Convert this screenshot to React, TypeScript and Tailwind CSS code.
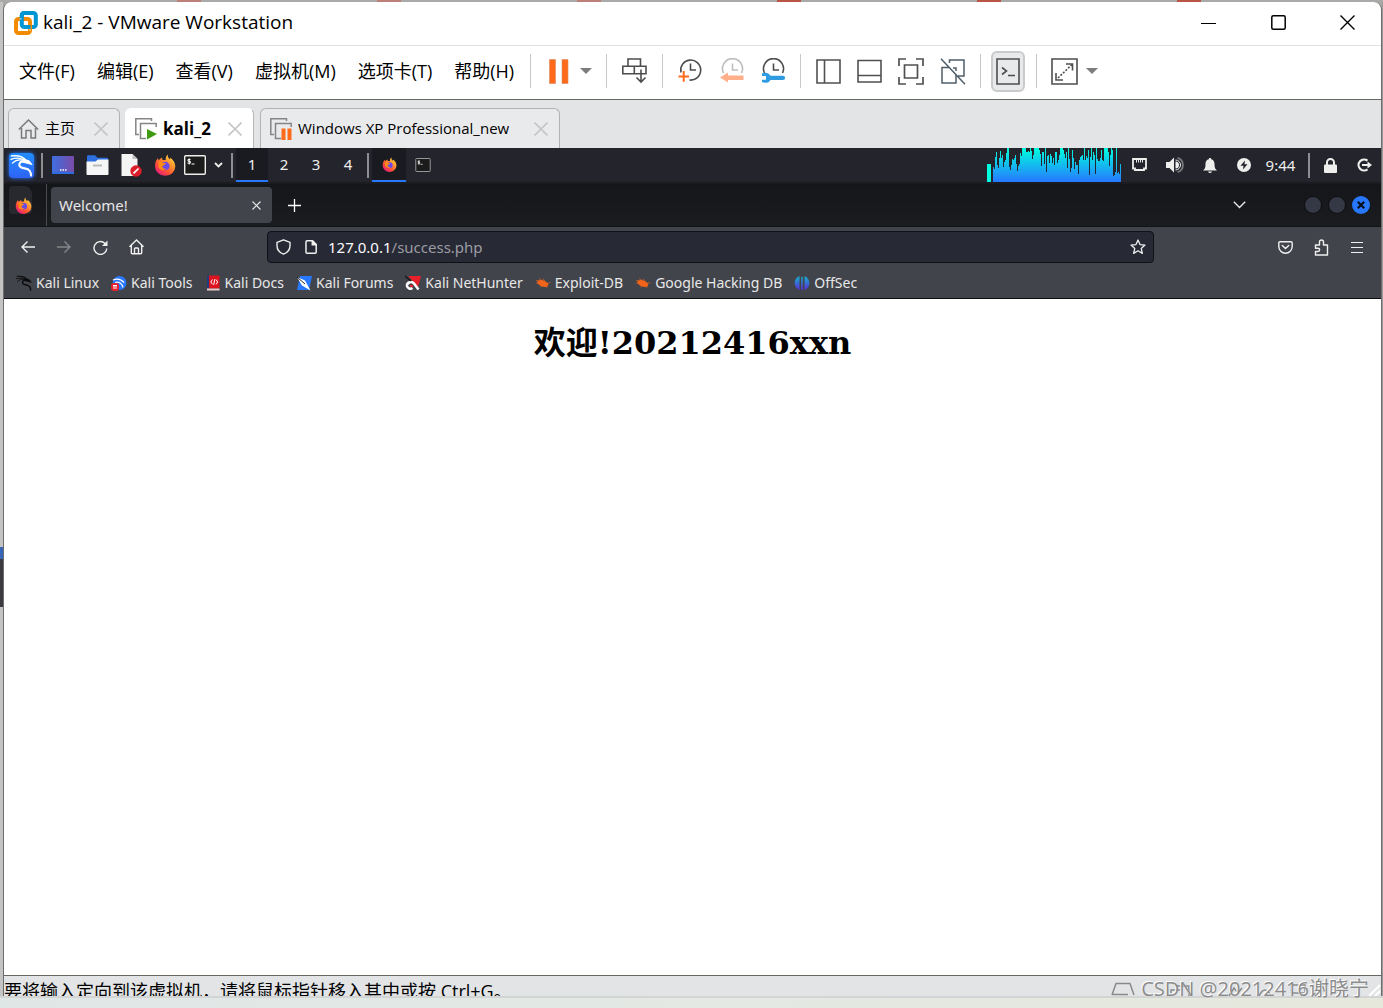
import { useState } from "react";
import type { ReactNode } from "react";

const MENUS = ["文件(F)", "编辑(E)", "查看(V)", "虚拟机(M)", "选项卡(T)", "帮助(H)"];

// CPU graph samples, one bar per pixel, 34 is full height
const CPU = [
  15, 13, 25, 30, 17, 14, 24, 31, 24, 27, 15, 20, 22, 29, 34, 34, 15, 12, 17, 23, 22, 24, 27, 18, 11, 16, 18, 29,
  26, 34, 34, 34, 34, 30, 30, 31, 30, 34, 31, 23, 27, 34, 34, 34, 34, 34, 32, 28, 16, 30, 30, 18, 34, 10, 26, 27,
  19, 28, 26, 19, 24, 17, 30, 30, 19, 22, 27, 34, 34, 34, 32, 28, 24, 30, 14, 34, 23, 10, 14, 32, 24, 13, 20, 17,
  17, 8, 22, 25, 26, 27, 22, 34, 22, 26, 24, 32, 7, 25, 34, 22, 30, 27, 8, 34, 23, 21, 21, 24, 32, 22, 21, 34,
  34, 34, 34, 30, 16, 27, 34, 32, 6, 7, 10, 34, 9, 10, 8, 18,
];

function VmwareLogo() {
  return (
    <svg width="24" height="24" viewBox="0 0 24 24" fill="none">
      <rect x="7.8" y="2" width="14" height="14" rx="2.5" stroke="#0095d3" strokeWidth="4" />
      <rect x="2" y="8" width="14" height="14" rx="2.5" stroke="#f38b00" strokeWidth="4" />
      <path d="M7.8 10V4.500Q7.800 2 10.300 2H14" stroke="#0095d3" strokeWidth="4" />
      <path d="M10 16h6.500" stroke="#0095d3" strokeWidth="4" />
      <path d="M5.500 7.900h2M16 18v2" stroke="#fff" strokeWidth=".8" />
    </svg>
  );
}

function Dragon({ size }: { size: number }) {
  return (
    <svg width={size} height={size} viewBox="0 0 24 24" fill="none" stroke="currentColor" strokeLinecap="round">
      <path d="M1.500 2C8 1.200 14 3 16.500 6.500" strokeWidth="1.600" />
      <path d="M1 5.500C7 3.500 12 4.500 15 6.500" strokeWidth="1.400" />
      <path d="M2.500 9.500C6 6 11 5.500 15 7" strokeWidth="1.400" />
      <path d="M14 5.500l6 1.500 3 4-4.500-1.200L13 8.500Z" fill="currentColor" strokeWidth="1" />
      <path d="M13 7.500C9.500 8.500 8.500 12 11.500 13.800 14.500 15.500 18.500 14.500 20.500 17.500 21.500 19 21.800 20.500 22 22.500" strokeWidth="2.200" />
    </svg>
  );
}

function Firefox({ size, id }: { size: number; id: string }) {
  return (
    <svg width={size} height={size} viewBox="0 0 22 22" className="shrink-0">
      <defs>
        <linearGradient id={id} x1="1" y1="0" x2=".2" y2="1">
          <stop offset="0" stopColor="#fff44f" />
          <stop offset=".35" stopColor="#ffa030" />
          <stop offset=".7" stopColor="#ff5034" />
          <stop offset="1" stopColor="#e31587" />
        </linearGradient>
      </defs>
      <path
        d="M14 .5c-.8 2.200.4 3.500 2 4.900.3-.6.300-1.200.1-1.900 2.900 2 5.200 5 5.200 9A10.100 9.400 0 0 1 1 12.300C1 8.900 2.100 6 4 4c0 1 .2 1.700.7 2.300C6 5 7.300 4 8.200 3.800 8 4.600 8.200 5.300 8.600 6c1.600-.2 2.500-.2 3.200.3C11.300 4 12.200 1.700 14 .5Z"
        fill={`url(#${id})`}
      />
      <circle cx="11.300" cy="12" r="4.300" fill="#6a4be8" />
      <path d="M4.500 7.800c2-.6 3.700.2 4.800.9 1 .3 2.200.1 2.700.5-.4 1.300-1.900 1.300-2.300 1.900-.4 1-.6 1-1.500 1.300.6 2 2.500 2.800 4.500 2.200C10 17.500 5.500 16.300 4.500 13Z" fill="#ff8a16" />
    </svg>
  );
}

function Terminal({ w, h }: { w: number; h: number }) {
  return (
    <svg width={w} height={h} viewBox="0 0 22 20" fill="none">
      <rect x=".7" y=".7" width="20.600" height="18.600" rx="1" fill="#1b1b1b" stroke="currentColor" strokeWidth="1.400" />
      <path d="M6.500 4.500H4v1.800h2.300v1.900H3.500M5.200 3.300v6.200M7.500 9h3" stroke="#fff" />
    </svg>
  );
}

function Caret() {
  return (
    <svg width="12" height="6" viewBox="0 0 12 6">
      <path d="M0 0h12L6 6Z" fill="#7d7d7d" />
    </svg>
  );
}

function Clock({ color, children }: { color: string; children: ReactNode }) {
  return (
    <svg width="26" height="26" viewBox="0 0 26 26" fill="none">
      <path d="M4.500 15A10 10 0 1 1 22.500 15" stroke={color} strokeWidth="1.600" />
      <path d="M13.500 5.500V12H19" stroke={color} strokeWidth="1.600" />
      {children}
    </svg>
  );
}

function Divider() {
  return <div className="h-[34px] w-px shrink-0 bg-[#c8c8c8]" />;
}

function ToolButton({ label, className = "", children }: { label: string; className?: string; children: ReactNode }) {
  return (
    <button aria-label={label} className={`flex shrink-0 items-center justify-center ${className}`}>
      {children}
    </button>
  );
}

function Cross() {
  return (
    <svg width="14" height="14" viewBox="0 0 14 14" stroke="#c6c6c6" strokeWidth="1.600">
      <path d="M.5.500l13 13M13.500.500l-13 13" />
    </svg>
  );
}

function VmTab({ icon, label, active, className }: { icon: ReactNode; label: string; active?: boolean; className: string }) {
  return (
    <div
      className={`flex h-10 items-center rounded-t-md border border-b-0 pl-[9px] pr-[11px] ${className} ${
        active ? "border-white border-r-[#b5b5b5] bg-white text-[17px] font-bold" : "border-[#b0b2b4] bg-[#e9eaec] text-[15px]"
      }`}
    >
      {icon}
      <button className="ml-[6px] flex-1 whitespace-nowrap text-left">{label}</button>
      <button aria-label={`关闭 ${label}`}>
        <Cross />
      </button>
    </div>
  );
}

function Stack({ children }: { children: ReactNode }) {
  return (
    <svg width="22" height="22" viewBox="0 0 22 22" fill="none" className="shrink-0">
      <path d="M4 16.500H.8V.8h15.700V3" stroke="#858585" strokeWidth="1.500" />
      <path d="M11 20.500H5.500V5.500h15.700V9" stroke="#858585" strokeWidth="1.500" />
      {children}
    </svg>
  );
}

function TitleBar() {
  return (
    <header className="flex h-11 items-center border-b border-[#e1e1e1] pb-[2px] pl-[10px]">
      <VmwareLogo />
      <h1 className="ml-[5px] flex-1 text-[19px]">kali_2 - VMware Workstation</h1>
      <button aria-label="最小化" className="flex h-10 w-[69px] items-center justify-center">
        <svg width="15" height="16" viewBox="0 0 15 16">
          <path d="M0 8.500h15" stroke="#000" />
        </svg>
      </button>
      <button aria-label="最大化" className="flex h-10 w-[70px] items-center justify-center">
        <svg width="15" height="15" viewBox="0 0 15 15">
          <rect x=".8" y=".8" width="13.400" height="13.400" rx="1.500" fill="none" stroke="#000" strokeWidth="1.500" />
        </svg>
      </button>
      <button aria-label="关闭" className="flex h-10 w-[68px] items-center justify-center">
        <svg width="15" height="15" viewBox="0 0 15 15">
          <path d="M.5.500l14 14M14.500.500l-14 14" stroke="#000" strokeWidth="1.400" />
        </svg>
      </button>
    </header>
  );
}

function MenuBar() {
  return (
    <div className="flex h-[53px] items-center pb-[3px] pl-[15px]">
      <nav className="flex gap-[22px] text-[18px]">
        {MENUS.map((m) => (
          <button key={m} className="whitespace-nowrap">
            {m}
          </button>
        ))}
      </nav>
      <div className="ml-4 flex items-center">
        <Divider />
        <ToolButton label="挂起" className="ml-[18px]">
          <svg width="20" height="25" viewBox="0 0 20 25" fill="#ff6a1a" stroke="#d98a62" strokeWidth=".6">
            <path d="M.5.500h6v24h-6zM13 .5h6v24h-6z" />
          </svg>
        </ToolButton>
        <ToolButton label="电源选项" className="ml-[11px]">
          <Caret />
        </ToolButton>
        <div className="w-[14px]" />
        <Divider />
        <ToolButton label="发送 Ctrl+Alt+Del" className="ml-[15px]">
          <svg width="26" height="26" viewBox="0 0 26 26" fill="none" stroke="#4d4d4d" strokeWidth="1.600">
            <path d="M6 8V1h12.500v7M.8 8.300h11.500v7.500H.8zM12.300 8.300H24v7.500H12.300zM19 11.500v12M14.500 19.500l4.500 4.500 4.500-4.500" />
          </svg>
        </ToolButton>
        <div className="w-[14px]" />
        <Divider />
        <ToolButton label="拍摄快照" className="ml-[14px]">
          <svg width="26" height="26" viewBox="0 0 26 26" fill="none" strokeWidth="1.600">
            <path d="M4 14.500A10 10 0 1 1 12.500 22" stroke="#4d4d4d" />
            <path d="M13.500 5.500V12H19" stroke="#4d4d4d" />
            <path d="M1.500 18.500h10.500M6.700 13v10.800" stroke="#ff6a1a" strokeWidth="2" />
          </svg>
        </ToolButton>
        <ToolButton label="恢复快照" className="ml-4">
          <Clock color="#bdbdbd">
            <path d="M1 19.500l8-5v3h15.500v4.500H9v2.500Z" fill="#ffb08a" />
          </Clock>
        </ToolButton>
        <ToolButton label="管理快照" className="ml-[15px]">
          <Clock color="#4d4d4d">
            <path d="M2 15.500c4-2 7.500 0 8.500 2.300h12.500a2 2 0 0 1 0 4.200H10.500c-1.500 3-5.500 3.500-8.500 2v-2.200h4v-3.800H2Z" fill="#2f9be0" />
          </Clock>
        </ToolButton>
        <div className="w-[14px]" />
        <Divider />
        <div className="ml-[15px] flex items-center gap-4 text-[#505050]">
          <ToolButton label="显示库">
            <svg width="25" height="25" viewBox="0 0 25 25" fill="none" stroke="currentColor" strokeWidth="1.600">
              <path d="M1 1h23v23H1zM8.500 1v23" />
            </svg>
          </ToolButton>
          <ToolButton label="显示缩略图">
            <svg width="25" height="25" viewBox="0 0 25 25" fill="none" stroke="currentColor" strokeWidth="1.600">
              <path d="M1 1.500h23v21.500H1zM1 16.500h23" />
            </svg>
          </ToolButton>
          <ToolButton label="全屏">
            <svg width="26" height="27" viewBox="0 0 26 27" fill="none" stroke="currentColor" strokeWidth="1.700">
              <path d="M8 1H1v7M18 1h7v7M1 19v7h7M25 19v7h-7M6.500 7h13v13h-13z" />
            </svg>
          </ToolButton>
          <ToolButton label="Unity">
            <svg width="26" height="27" viewBox="0 0 26 27" fill="none" stroke="#4f5d68" strokeWidth="1.500">
              <path d="M9.500 5V2H24v16h-6M9 9.500H2v15.500h14v-8M13 10h3v3M1 .8l24 25.500" />
            </svg>
          </ToolButton>
        </div>
        <div className="w-[14px]" />
        <Divider />
        <ToolButton label="控制台视图" className="ml-[10px] h-[41px] w-[34px] rounded-md border-2 border-[#c9cacb] bg-[#e8e9eb]">
          <svg width="24" height="27" viewBox="0 0 24 27" fill="none" stroke="#4d4d4d" strokeWidth="1.600">
            <path d="M1 1h22v25H1z" />
            <path d="M6 9.500l4.500 3.500L6 16.500M12 17.500h7" />
          </svg>
        </ToolButton>
        <div className="w-[11px]" />
        <Divider />
        <ToolButton label="拉伸客户机" className="ml-[14px]">
          <svg width="27" height="27" viewBox="0 0 27 27" fill="none" stroke="#4d4d4d" strokeWidth="1.600">
            <path d="M1 1h25v25H1zM15 6h6.500v6.500M5 15v7h7" />
            <path d="M7 20L21 6.500" strokeDasharray="2 1.500" />
          </svg>
        </ToolButton>
        <ToolButton label="拉伸选项" className="ml-2">
          <Caret />
        </ToolButton>
      </div>
    </div>
  );
}

function VmTabs() {
  return (
    <div className="flex h-12 items-end bg-[#e2e4e6] pl-1">
      <VmTab
        label="主页"
        className="w-[112px]"
        icon={
          <svg width="21" height="20" viewBox="0 0 21 20" fill="none" stroke="#7a7a7a" strokeWidth="1.500">
            <path d="M.8 10.500L10.500 1l9.700 9.500M3.500 9v10h4.500v-7.500h5V19h4.500V9" />
          </svg>
        }
      />
      <VmTab
        label="kali_2"
        active
        className="ml-[5px] w-[129px]"
        icon={
          <Stack>
            <path d="M12 11v10.500L22 16Z" fill="#3f9c12" />
          </Stack>
        }
      />
      <VmTab
        label="Windows XP Professional_new"
        className="ml-[6px] w-[300px]"
        icon={
          <Stack>
            <path d="M11.500 10.500h4V22h-4zM17.500 10.500h4V22h-4z" fill="#ff6a1a" />
          </Stack>
        }
      />
    </div>
  );
}

function PanelSep() {
  return <div className="h-[25px] w-[2px] shrink-0 bg-[#8d8e91]" />;
}

function KaliPanel() {
  const [space, setSpace] = useState(1);
  return (
    <div className="flex h-[36px] items-start border-b-2 border-[#1b1c20] bg-[#23242c] text-[#eeeeec]">
      <div className="flex h-[34px] flex-1 items-center">
        <button
          aria-label="Applications"
          className="ml-[5px] flex h-[25px] w-[25px] items-center justify-center rounded-sm bg-linear-to-b from-[#1f8cff] to-[#2e63f5] text-white shadow-[0_0_4px_#2777ff]"
        >
          <Dragon size={23} />
        </button>
        <div className="w-[7px]" />
        <PanelSep />
        <ToolButton label="Show desktop" className="ml-[3px] w-[34px]">
          <svg width="22" height="18" viewBox="0 0 22 18">
            <defs>
              <linearGradient id="desk" x1="0" y1="0" x2="1" y2="0">
                <stop offset="0" stopColor="#3e6fe0" />
                <stop offset="1" stopColor="#7a4ba8" />
              </linearGradient>
            </defs>
            <rect width="22" height="18" rx="1" fill="url(#desk)" />
            <path d="M0 17h22" stroke="#2d6be0" strokeWidth="2" />
            <path d="M8 14h1.500M10.500 14h1.500M13 14h1.500" stroke="#fff" strokeWidth="1.500" />
          </svg>
        </ToolButton>
        <ToolButton label="Files" className="w-[34px]">
          <svg width="23" height="20" viewBox="0 0 23 20">
            <path d="M1 1.500Q1 .3 2.200.300H9l2.500 2.500h9.300q1.200 0 1.200 1.200V9H1Z" fill="#2d6fe0" />
            <path d="M.5 6.500h9L12 4.500h10.500V19q0 1-1 1h-20q-1 0-1-1Z" fill="#f6f6f6" />
            <path d="M7 10.500h9" stroke="#b9b9b9" strokeWidth="2" />
          </svg>
        </ToolButton>
        <ToolButton label="Text editor" className="w-[34px]">
          <svg width="22" height="23" viewBox="0 0 22 23">
            <path d="M1.500 0h11l5 5v17h-16Z" fill="#f4f4f4" />
            <path d="M12.500 0l5 5h-5Z" fill="#bdbdbd" />
            <circle cx="16" cy="17" r="5.700" fill="#dc1d2a" />
            <path d="M13.500 19.300l5-4.800" stroke="#fff" strokeWidth="1.700" />
          </svg>
        </ToolButton>
        <ToolButton label="Firefox" className="w-[34px]">
          <Firefox size={22} id="ff-launch" />
        </ToolButton>
        <ToolButton label="Terminal" className="w-[26px]">
          <Terminal w={22} h={20} />
        </ToolButton>
        <ToolButton label="More launchers" className="w-5">
          <svg width="9" height="6" viewBox="0 0 9 6" fill="none" stroke="currentColor" strokeWidth="1.800">
            <path d="M1 1l3.500 3.500L8 1" />
          </svg>
        </ToolButton>
        <div className="w-[3px]" />
        <PanelSep />
        <div className="ml-[3px] flex text-[15px]">
          {[1, 2, 3, 4].map((n) => (
            <button
              key={n}
              onClick={() => setSpace(n)}
              className={`h-[34px] w-8 border-b-2 ${space === n ? "border-[#2777ff] bg-[#1a1b21]" : "border-transparent"}`}
            >
              {n}
            </button>
          ))}
        </div>
        <div className="w-[3px]" />
        <PanelSep />
        <ToolButton label="Welcome! - Firefox" className="ml-[3px] h-[34px] w-[34px] border-b-2 border-[#2777ff] bg-[#1a1b21]">
          <Firefox size={15} id="ff-task" />
        </ToolButton>
        <ToolButton label="Terminal window" className="w-[34px] text-[#9a9b9e]">
          <Terminal w={16} h={14} />
        </ToolButton>
      </div>
      <svg width="135" height="34" viewBox="0 0 135 34" className="shrink-0">
        <defs>
          <linearGradient id="cpu" x1="0" y1="0" x2="0" y2="34" gradientUnits="userSpaceOnUse">
            <stop offset="0" stopColor="#00ffde" />
            <stop offset="1" stopColor="#2777ff" />
          </linearGradient>
        </defs>
        <rect x="0" y="16" width="4" height="18" fill="#00ffde" />
        {CPU.map((v, i) => (
          <rect key={i} x={6 + i} y={34 - v} width="1" height={v} fill="url(#cpu)" shapeRendering="crispEdges" />
        ))}
      </svg>
      <div className="flex h-[34px] items-center">
        <ToolButton label="Network" className="w-[35px]">
          <svg width="15" height="14" viewBox="0 0 15 14" fill="none" stroke="currentColor" strokeWidth="1.800">
            <path d="M1 1h13v9.500h-2V12H3v-1.500H1Z" />
            <path d="M4.500 2v2.500M6.500 2v2.500M8.500 2v2.500M10.500 2v2.500" strokeWidth="1" />
          </svg>
        </ToolButton>
        <ToolButton label="Volume" className="w-[35px]">
          <svg width="18" height="16" viewBox="0 0 18 16" fill="none">
            <path d="M0 5h3.500L8 .5v15L3.500 11H0Z" fill="currentColor" />
            <path d="M9.500 4.500a3.500 3.500 0 0 1 0 7Z" fill="currentColor" />
            <path d="M9.500 3a5 5 0 0 1 0 10" stroke="currentColor" />
            <path d="M11.500.800a7.500 7.500 0 0 1 0 14.400" stroke="#77787c" strokeWidth="1.800" />
          </svg>
        </ToolButton>
        <ToolButton label="Notifications" className="w-[35px]">
          <svg width="14" height="15" viewBox="0 0 14 15" fill="currentColor">
            <path d="M7 0c.8 0 1.200.500 1.200 1.200C10.500 1.700 11.500 3.500 11.500 6c0 3.500.5 5 2.500 6.500H0C2 11 2.500 9.500 2.500 6c0-2.500 1-4.300 3.300-4.800C5.800.500 6.200 0 7 0ZM5 13.500h4Q8.500 15 7 15t-2-1.500Z" />
          </svg>
        </ToolButton>
        <ToolButton label="Power" className="w-[34px]">
          <svg width="14" height="14" viewBox="0 0 14 14">
            <circle cx="7" cy="7" r="7" fill="currentColor" />
            <path d="M8 2.500L3.500 7.800h3L6 11.500l4.500-5.300h-3Z" fill="#23242c" />
          </svg>
        </ToolButton>
        <span className="w-[39px] text-center text-[15px]">9:44</span>
        <div className="w-[8px]" />
        <PanelSep />
        <ToolButton label="Lock screen" className="ml-[3px] w-[35px]">
          <svg width="13" height="15" viewBox="0 0 13 15">
            <path d="M3 7V4.500a3.500 3.500 0 0 1 7 0V7" fill="none" stroke="currentColor" strokeWidth="2" />
            <rect y="6.500" width="13" height="8.500" rx="1" fill="currentColor" />
          </svg>
        </ToolButton>
        <ToolButton label="Log out" className="w-[33px]">
          <svg width="15" height="14" viewBox="0 0 15 14" fill="none" stroke="currentColor" strokeWidth="2.200">
            <path d="M10.500 2.700A5.500 5.500 0 1 0 10.500 11.300" />
            <path d="M5 7h6" />
            <path d="M10.500 3.500L15 7l-4.500 3.500Z" fill="currentColor" stroke="none" />
          </svg>
        </ToolButton>
      </div>
    </div>
  );
}

function BrowserTabs() {
  return (
    <div className="flex h-[43px] items-center border-b border-[#131417] bg-linear-to-b from-[#15161a] to-[#1b1c20]">
      <div className="flex h-full w-[43px] items-start border-r border-[#4a4b50] pl-[5px] pt-[2px]">
        <button
          aria-label="Firefox View"
          className="flex h-7 w-[23px] items-end justify-end rounded-sm rounded-tr-lg bg-[#28292e]"
        >
          <Firefox size={17} id="ff-view" />
        </button>
      </div>
      <div className="ml-1 flex h-9 w-[221px] items-center rounded bg-[#42444b] px-2 text-[15px] text-[#e6e6e6]">
        <button className="flex-1 text-left">Welcome!</button>
        <ToolButton label="Close tab" className="w-4">
          <svg width="9" height="9" viewBox="0 0 9 9" stroke="currentColor" strokeWidth="1.200">
            <path d="M.5.500l8 8M8.500.500l-8 8" />
          </svg>
        </ToolButton>
      </div>
      <ToolButton label="New tab" className="ml-1 w-9 text-white">
        <svg width="13" height="13" viewBox="0 0 13 13" stroke="currentColor" strokeWidth="1.300">
          <path d="M6.500 0v13M0 6.500h13" />
        </svg>
      </ToolButton>
      <div className="flex-1" />
      <ToolButton label="List all tabs" className="w-9 text-[#e6e6e6]">
        <svg width="13" height="8" viewBox="0 0 13 8" fill="none" stroke="currentColor" strokeWidth="1.400">
          <path d="M.8.800l5.700 5.700L12.200.800" />
        </svg>
      </ToolButton>
      <div className="ml-[47px] mr-[11px] flex gap-[6px]">
        <button aria-label="Minimize" className="h-[18px] w-[18px] rounded-full border border-[#0c0d0f] bg-[#353945]" />
        <button aria-label="Maximize" className="h-[18px] w-[18px] rounded-full border border-[#0c0d0f] bg-[#353945]" />
        <button aria-label="Close" className="flex h-[18px] w-[18px] items-center justify-center rounded-full bg-[#2777ff]">
          <svg width="8" height="8" viewBox="0 0 8 8" stroke="#0a0e1a" strokeWidth="2.200">
            <path d="M.8.800l6.400 6.400M7.200.800L.8 7.200" />
          </svg>
        </button>
      </div>
    </div>
  );
}

function NavBar() {
  return (
    <div className="flex h-10 items-center bg-[#42444b] px-[6px] text-[#f0f0f0]">
      <ToolButton label="Back" className="w-9">
        <svg width="14" height="12" viewBox="0 0 14 12" fill="none" stroke="currentColor" strokeWidth="1.400">
          <path d="M14 6H1M6.500.500L1 6l5.500 5.500" />
        </svg>
      </ToolButton>
      <ToolButton label="Forward" className="w-9 text-[#85868b]">
        <svg width="14" height="12" viewBox="0 0 14 12" fill="none" stroke="currentColor" strokeWidth="1.400">
          <path d="M0 6h13M7.500.500L13 6l-5.500 5.500" />
        </svg>
      </ToolButton>
      <ToolButton label="Reload" className="w-9">
        <svg width="15" height="15" viewBox="0 0 15 15" fill="none" stroke="currentColor" strokeWidth="1.400">
          <path d="M13.800 8.500A6.400 6.400 0 1 1 11.800 3.300L13.500 5" />
          <path d="M14.500.500v5.500H9Z" fill="currentColor" stroke="none" />
        </svg>
      </ToolButton>
      <ToolButton label="Home" className="w-9">
        <svg width="15" height="16" viewBox="0 0 15 16" fill="none" stroke="currentColor" strokeWidth="1.400">
          <path d="M.5 7.700l7-6.700 7 6.700M2.300 6.500v7.300q0 1 1 1h8.400q1 0 1-1V6.500M5.500 14.500V9.800q0-.8.8-.8h2.400q.8 0 .8.800v4.700" />
        </svg>
      </ToolButton>
      <div className="mx-[113px] flex h-8 flex-1 items-center rounded border border-[#101116] bg-[#272935]">
        <ToolButton label="Tracking protection" className="w-[30px]">
          <svg width="15" height="16" viewBox="0 0 15 16" fill="none" stroke="currentColor" strokeWidth="1.400">
            <path d="M7.500.800L14 3.300v3.200c0 4-2.500 7.200-6.500 8.700C3.500 13.700 1 10.500 1 6.500V3.300Z" strokeLinejoin="round" />
          </svg>
        </ToolButton>
        <ToolButton label="Site information" className="w-[26px]">
          <svg width="12" height="14" viewBox="0 0 12 14" fill="none" stroke="currentColor" strokeWidth="1.500">
            <path d="M2 .8h5.500l3.700 3.700v7.700q0 1-1 1H2q-1 0-1-1V1.800q0-1 1-1Z" />
            <path d="M7.300.800v4h4Z" fill="currentColor" />
          </svg>
        </ToolButton>
        <a href="#success" className="ml-1 flex-1 text-[15px] text-[#9b9ca3]">
          <span className="text-[#fbfbfe]">127.0.0.1</span>/success.php
        </a>
        <ToolButton label="Bookmark this page" className="w-[30px]">
          <svg width="16" height="16" viewBox="0 0 16 16" fill="none" stroke="currentColor" strokeWidth="1.300" strokeLinejoin="round">
            <path d="M8 1l2 4.600 5 .5-3.800 3.300 1.200 5L8 11.800l-4.400 2.600 1.200-5L1 6.100l5-.5Z" />
          </svg>
        </ToolButton>
      </div>
      <ToolButton label="Save to Pocket" className="w-9">
        <svg width="15" height="13" viewBox="0 0 15 13" fill="none" stroke="currentColor" strokeWidth="1.400">
          <path d="M2 .8h11q1.200 0 1.200 1.200v3.500a6.700 6.700 0 0 1-13.400 0V2Q.8.800 2 .8Z" />
          <path d="M4.300 4.500l3.200 3 3.200-3" strokeLinecap="round" />
        </svg>
      </ToolButton>
      <ToolButton label="Extensions" className="w-9">
        <svg width="15" height="17" viewBox="0 0 15 17" fill="none" stroke="currentColor" strokeWidth="1.400" strokeLinejoin="round">
          <path d="M1.500 6h4V3a2 2 0 0 1 4 0v3h4v10h-12v-3.500H4a1.500 1.500 0 0 0 0-3.300H1.500Z" />
        </svg>
      </ToolButton>
      <ToolButton label="Menu" className="w-9">
        <svg width="12" height="11" viewBox="0 0 12 11" stroke="currentColor" strokeWidth="1">
          <path d="M0 .5h12M0 5.500h12M0 10.500h12" />
        </svg>
      </ToolButton>
    </div>
  );
}

function Bug() {
  return (
    <svg width="16" height="16" viewBox="0 0 16 16">
      <path d="M2.500 6c2-1.500 5.500-1.500 8 .5l3 2.300-1 2.700c-2.500.8-6 .3-7.800-1.200C2.800 9 2 7.500 2.500 6Z" fill="#f26419" />
      <path d="M1 8h3M4 3.500l3 2M8 3.500l2 3M15.500 7.500l-4 1M5.500 12.500l2-2M12 13l-1-2.500M1 5.500h2.500" stroke="#f26419" strokeWidth=".6" />
    </svg>
  );
}

const BOOKMARKS: { label: string; icon: ReactNode }[] = [
  {
    label: "Kali Linux",
    icon: (
      <span className="text-[#0b0b0d]">
        <Dragon size={16} />
      </span>
    ),
  },
  {
    label: "Kali Tools",
    icon: (
      <svg width="16" height="16" viewBox="0 0 16 16" fill="none">
        <circle cx="8.500" cy="8" r="7" fill="#2777ff" />
        <path d="M2 5c4-1.500 8-1 11 2.500M4 7.500c4-1 7 .5 8 5" stroke="#fff" strokeWidth="1.200" />
        <rect y="8" width="8" height="8" rx="3" fill="#e8202c" />
        <path d="M2 10.500h4M3 10.500v3.500M5 10.500v3.500" stroke="#fff" />
      </svg>
    ),
  },
  {
    label: "Kali Docs",
    icon: (
      <svg width="16" height="16" viewBox="0 0 16 16" fill="none">
        <path d="M2 .500h2.500v13H2z" fill="#233a7a" />
        <path d="M4 .500h10.500v13H4z" fill="#dd1420" />
        <path d="M2 13.500h12.500v2H2z" fill="#e9c9c9" />
        <path d="M7.500 4.500L5.800 7l1.700 2.300M11 4.500L12.700 7 11 9.300M9.800 4.200L8.700 9.800" stroke="#fff" />
      </svg>
    ),
  },
  {
    label: "Kali Forums",
    icon: (
      <svg width="16" height="16" viewBox="0 0 16 16">
        <path d="M4 1h12l-3 14H1Z" fill="#2777ff" />
        <path d="M1 2l8 3.500 5.500 10L6 10.500Z" fill="#fff" />
        <path d="M1 2l8 7" stroke="#222" />
      </svg>
    ),
  },
  {
    label: "Kali NetHunter",
    icon: (
      <svg width="16" height="16" viewBox="0 0 16 16" fill="none">
        <path d="M3 1h13l-3 11Z" fill="#e8202c" />
        <path d="M13.500 14.500L9 8.500C6 5.500 1.500 8 2 11c.5 2.500 3.500 3.500 5.500 2" stroke="#fff" strokeWidth="2.500" />
        <path d="M0 1l6 5" stroke="#1a1a1a" strokeWidth="1.500" />
        <path d="M5 10.500l3 1" stroke="#e8202c" strokeWidth="2" />
      </svg>
    ),
  },
  { label: "Exploit-DB", icon: <Bug /> },
  { label: "Google Hacking DB", icon: <Bug /> },
  {
    label: "OffSec",
    icon: (
      <svg width="16" height="16" viewBox="0 0 16 16">
        <defs>
          <linearGradient id="offsec" x1="0" y1="0" x2="0" y2="1">
            <stop offset="0" stopColor="#10b5c9" />
            <stop offset="1" stopColor="#5a2be0" />
          </linearGradient>
        </defs>
        <path d="M5.500 1v14C-1 12.500-1 3.500 5.500 1ZM10.500 1v14c6.500-2.500 6.500-11.500 0-14ZM7.200 2h1.600v13H7.200Z" fill="url(#offsec)" />
      </svg>
    ),
  },
];

function BookmarkBar() {
  return (
    <nav className="flex h-8 items-center gap-3 border-b border-[#0e0e11] bg-[#42444b] pl-3 text-[14px] text-[#e8e8e8]">
      {BOOKMARKS.map((b) => (
        <a key={b.label} href="#bookmark" className="flex items-center gap-1 whitespace-nowrap">
          {b.icon}
          {b.label}
        </a>
      ))}
    </nav>
  );
}

export default function App() {
  return (
    <div className="relative flex min-h-screen flex-col bg-[#a9a9a8] font-['Open_Sans','Noto_Sans_CJK_SC',sans-serif] text-black">
      {/* tabs of the window behind */}
      <div className="flex h-[2px] gap-[176px] overflow-hidden pl-[177px]">
        <div className="w-6 shrink-0 bg-[#bd8078]" />
        <div className="w-6 shrink-0 bg-[#bd8078]" />
        <div className="w-6 shrink-0 bg-[#bd8078]" />
        <div className="w-6 shrink-0 bg-[#b85545]" />
        <div className="w-6 shrink-0 bg-[#b85545]" />
        <div className="w-6 shrink-0 bg-[#b85545]" />
      </div>
      <div className="flex flex-1">
        <div className="flex w-[3px] shrink-0 flex-col">
          <div className="h-[545px] bg-[#c4c4c4]" />
          <div className="h-3 bg-[#3766b8]" />
          <div className="h-12 bg-[#3a3a40]" />
          <div className="flex-1 bg-[#c4c4c4]" />
        </div>
        <div className="flex flex-1 flex-col overflow-hidden rounded-t-lg border-x border-[#6d6d6d] bg-white">
          <TitleBar />
          <MenuBar />
          <div className="border-t border-[#66675f]">
            <VmTabs />
          </div>
          <div className="flex flex-1 flex-col font-['Noto_Sans',sans-serif]">
            <KaliPanel />
            <BrowserTabs />
            <NavBar />
            <BookmarkBar />
            <main className="flex-1 bg-white pt-[21px] text-center">
              <h2 className="font-['DejaVu_Serif','Noto_Sans_CJK_SC',serif] text-[32px] font-bold leading-[46px]">
                欢迎!20212416xxn
              </h2>
            </main>
          </div>
          <footer className="flex h-[21px] items-start overflow-hidden whitespace-nowrap border-t border-[#66675f] bg-[#e2e4e6] text-[18px] leading-[30px]">
            <p className="flex-1">要将输入定向到该虚拟机，请将鼠标指针移入其中或按 Ctrl+G。</p>
            {/* device icons, cut by the bottom edge */}
            <svg width="270" height="20" viewBox="0 0 270 20" fill="none" stroke="#8a8a8a" strokeWidth="1.500" className="shrink-0">
              <path d="M1 19L5 7.500h14l4 11.500M1 18.500h16" />
              <path d="M64 10h14v10M60 20v-6h10M118 20l5-8 4 5 4-5M148 20q6-12 12 0M180 9h14v8h-14z" />
              <path d="M258 20l11-11M264 20l5-5" stroke="#fff" strokeWidth="2" />
            </svg>
          </footer>
        </div>
        <div className="w-px bg-[#9a9a9a]" />
      </div>
      <div className="h-3 border-t-2 border-[#d3d5d5] bg-linear-to-r from-[#dfe6e6] via-[#e4e9e4] to-[#e6e8dc]" />
      <div className="absolute bottom-[5px] right-[14px] text-[20px] leading-7 text-[#8c8c8c] [text-shadow:-1px_-1px_0_#fff]">
        CSDN @20212416谢晓宁
      </div>
    </div>
  );
}
